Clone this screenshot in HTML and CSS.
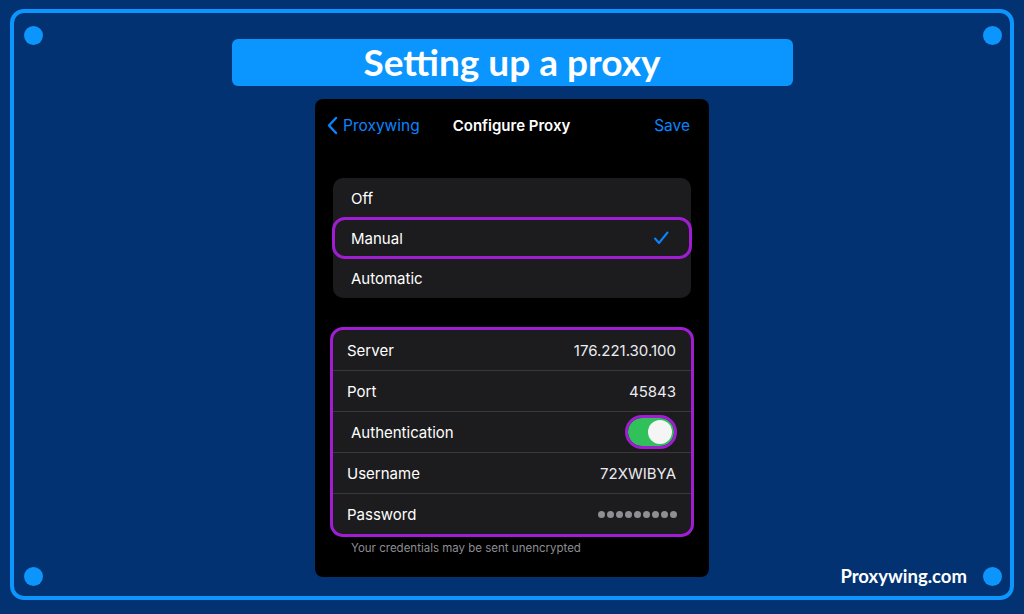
FILE: index.html
```html
<!DOCTYPE html>
<html lang="en">
<head>
    <meta charset="UTF-8">
    <meta name="viewport" content="width=device-width, initial-scale=1.0">
    <title>Setting up a proxy</title>
    <link rel="stylesheet" href="styles.css">
</head>
<body>
    <div class="frame">
        <span class="dot dot-tl"></span>
        <span class="dot dot-tr"></span>
        <span class="dot dot-bl"></span>
        <span class="dot dot-br"></span>

        <h1 class="title">Setting up a proxy</h1>

        <div class="phone">
            <div class="nav">
                <a class="back" href="#">
                    <svg width="11" height="19" viewBox="0 0 11 19"><path d="M9 2 L2 9.5 L9 17" fill="none" stroke="#0a84ff" stroke-width="2.4" stroke-linecap="round" stroke-linejoin="round"/></svg>
                    Proxywing
                </a>
                <span class="nav-title">Configure Proxy</span>
                <a class="save" href="#">Save</a>
            </div>

            <div class="group">
                <div class="row">Off</div>
                <div class="row selected">
                    <span>Manual</span>
                    <svg width="16" height="14" viewBox="0 0 16 14"><path d="M2 7.5 L6 12 L14.5 1.5" fill="none" stroke="#0a84ff" stroke-width="2" stroke-linecap="round" stroke-linejoin="round"/></svg>
                </div>
                <div class="row">Automatic</div>
            </div>

            <div class="group group-form">
                <div class="row field"><span>Server</span><span class="value">176.221.30.100</span></div>
                <div class="row field"><span>Port</span><span class="value">45843</span></div>
                <div class="row field auth">
                    <span>Authentication</span>
                    <span class="toggle"><span class="knob"></span></span>
                </div>
                <div class="row field"><span>Username</span><span class="value">72XWIBYA</span></div>
                <div class="row field">
                    <span>Password</span>
                    <span class="dots">
                        <i></i><i></i><i></i><i></i><i></i><i></i><i></i><i></i><i></i>
                    </span>
                </div>
            </div>
            <p class="note">Your credentials may be sent unencrypted</p>
        </div>

        <div class="brand">Proxywing.com</div>
    </div>
</body>
</html>
```

FILE: styles.css
```css
body {
    margin: 0;
    background-color: #023272;
    font-family: Inter, Roboto, sans-serif;
}
.frame {
    position: relative;
    margin: 9px 10px;
    height: 583px;
    border: 4px solid #0b95fd;
    border-radius: 14px;
    display: flex;
    flex-direction: column;
    align-items: center;
}
.dot {
    position: absolute;
    width: 19px;
    height: 19px;
    border-radius: 50%;
    background-color: #0b95fd;
}
.dot-tl { left: 10px; top: 13px; }
.dot-tr { right: 8px; top: 13px; }
.dot-bl { left: 10px; bottom: 10px; }
.dot-br { right: 8px; bottom: 10px; }
.title {
    margin: 26px 0 0;
    width: 561px;
    height: 47px;
    line-height: 45px;
    background-color: #0a95ff;
    border-radius: 6px;
    color: #fff;
    text-align: center;
    font-family: Lato, "Open Sans", sans-serif;
    font-size: 37px;
    font-weight: 700;
}
.phone {
    margin-top: 13px;
    width: 394px;
    height: 478px;
    box-sizing: border-box;
    padding: 0 18px;
    background-color: #000;
    border-radius: 8px;
}
.nav {
    height: 52px;
    display: grid;
    grid-template-columns: 1fr auto 1fr;
    align-items: center;
    font-size: 15.5px;
    margin: 0 1px 0 -6px;
}
.back, .save {
    color: #0a84ff;
    text-decoration: none;
}
.back {
    display: flex;
    align-items: center;
    gap: 5px;
}
.save {
    text-align: right;
}
.nav-title {
    color: #fff;
    font-weight: 600;
    font-size: 15px;
    margin-left: 6px;
}
.group {
    margin-top: 27px;
    background-color: #1c1c1e;
    border-radius: 10px;
    color: #fff;
    font-size: 15px;
}
.row {
    height: 40px;
    padding: 0 18px;
    display: flex;
    align-items: center;
    justify-content: space-between;
}
.row.selected {
    height: 38px;
    border-top: 1px solid #3a3a3c;
    border-bottom: 1px solid #3a3a3c;
    outline: 3px solid #a01dd3;
    outline-offset: -2px;
    border-radius: 12px;
    padding-right: 22px;
}
.group-form {
    margin-top: 32px;
    outline: 3px solid #a01dd3;
    border-radius: 10px;
}
.field {
    padding: 0 15px 0 14px;
}
.field + .field {
    border-top: 1px solid #38383a;
}
.value {
    color: #ebebf0;
}
.auth {
    padding: 0 17px 0 18px;
}
.toggle {
    width: 46px;
    height: 28px;
    box-sizing: border-box;
    border-radius: 14px;
    background-color: #30c15a;
    outline: 3px solid #a01dd3;
    display: flex;
    align-items: center;
    justify-content: flex-end;
    padding: 0 2px;
}
.knob {
    width: 24px;
    height: 24px;
    border-radius: 50%;
    background-color: #f5f5f5;
}
.dots {
    display: flex;
    gap: 2px;
    margin-right: -1px;
}
.dots i {
    width: 7px;
    height: 7px;
    border-radius: 50%;
    background-color: #8e8e93;
}
.note {
    margin: 7px 0 0 18px;
    color: #8d8d93;
    font-size: 11.5px;
}
.brand {
    position: absolute;
    right: 43px;
    bottom: 9px;
    color: #fff;
    font-family: Lato, "Open Sans", sans-serif;
    font-weight: 700;
    font-size: 18.5px;
}
```
